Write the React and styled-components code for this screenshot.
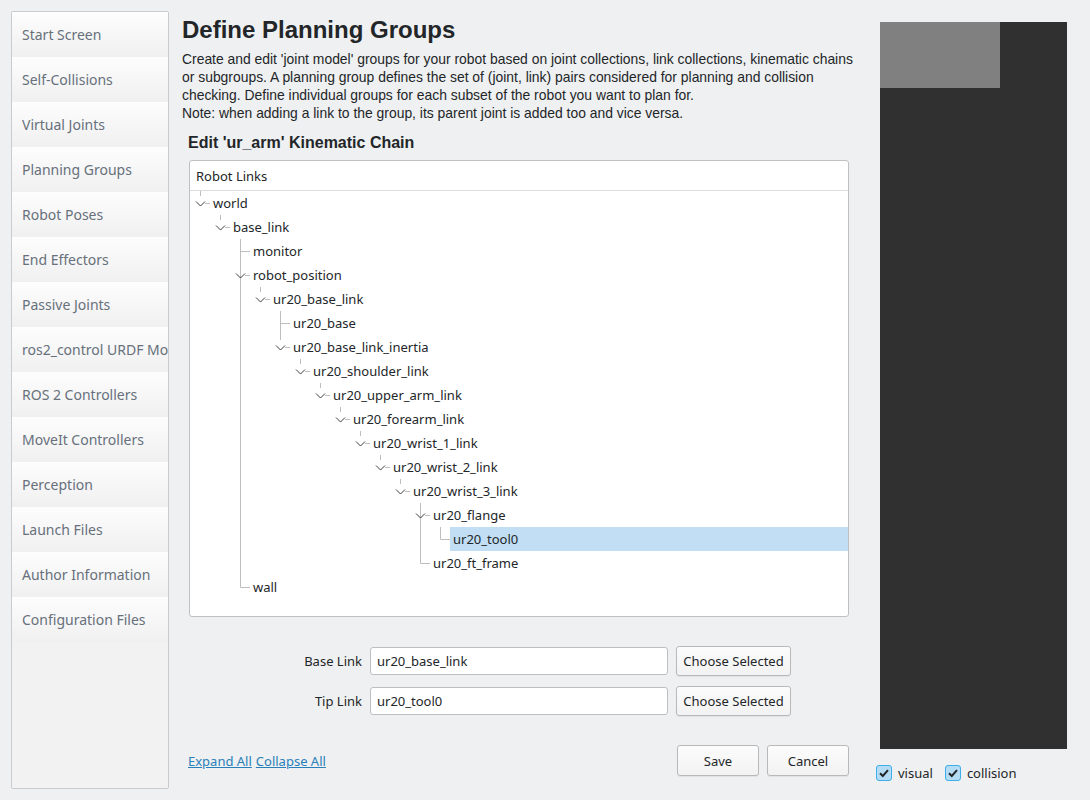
import React from "react";
import styled, { createGlobalStyle } from "styled-components";

const Global = createGlobalStyle`
  html, body { margin: 0; padding: 0; background: #eff0f1; }
  body { font-family: "Noto Sans", sans-serif; font-size: 13px; color: #232629; }
`;

const Page = styled.div`
  display: flex;
  height: 800px;
  box-sizing: border-box;
  padding: 11px 0 11px 11px;
  overflow: hidden;
`;

const Sidebar = styled.nav`
  width: 158px;
  box-sizing: border-box;
  border: 1px solid #cacbcc;
  border-radius: 2px;
  background: #f2f2f3;
  display: flex;
  flex-direction: column;
  flex-shrink: 0;
`;

const NavItem = styled.div`
  height: 45px;
  flex-shrink: 0;
  display: flex;
  align-items: center;
  padding-left: 10px;
  background: linear-gradient(#fdfdfd, #f0f0f1);
  color: #67707b;
  font-size: 14px;
  white-space: nowrap;
  overflow: hidden;
`;

const Main = styled.main`
  width: 680px;
  margin-left: 13px;
  display: flex;
  flex-direction: column;
  flex-shrink: 0;
`;

const Title = styled.h1`
  margin: 3px 0 0;
  font-family: "Liberation Sans", Arial, sans-serif;
  font-weight: bold;
  font-size: 24px;
  line-height: 32px;
  color: #232629;
`;

const Desc = styled.p`
  margin: 4px 0 0;
  font-family: "Liberation Sans", Arial, sans-serif;
  font-size: 13.9px;
  line-height: 18px;
  white-space: nowrap;
  color: #232629;
`;

const Group = styled.section`
  margin-left: 6px;
  width: 661px;
  display: flex;
  flex-direction: column;
`;

const SubTitle = styled.h2`
  margin: 10px 0 0;
  font-family: "Liberation Sans", Arial, sans-serif;
  font-weight: bold;
  font-size: 16px;
  line-height: 22px;
`;

const TreePanel = styled.div`
  margin-top: 6px;
  margin-left: 1px;
  height: 457px;
  box-sizing: border-box;
  border: 1px solid #bfc0c1;
  border-radius: 3px;
  background: #fff;
  display: flex;
  flex-direction: column;
  overflow: hidden;
`;

const TreeHeader = styled.div`
  height: 29px;
  border-bottom: 1px solid #dcdddd;
  display: flex;
  align-items: center;
  padding-left: 6px;
`;

const Row = styled.div`
  height: 24px;
  display: flex;
  align-items: stretch;
`;

const Label = styled.div`
  flex: 1;
  display: flex;
  align-items: center;
  padding-left: 3px;
  background: ${(p) => (p.$selected ? "#c1def4" : "transparent")};
  white-space: nowrap;
`;

const FormGrid = styled.div`
  margin-top: 29px;
  display: grid;
  grid-template-columns: 174px 298px 115px;
  grid-auto-rows: 30px;
  column-gap: 8px;
  row-gap: 10px;
  align-items: center;
`;

const FieldLabel = styled.label`
  text-align: right;
`;

const Input = styled.div`
  height: 28px;
  box-sizing: border-box;
  border: 1px solid #bcbebf;
  border-radius: 3px;
  background: #fff;
  display: flex;
  align-items: center;
  padding-left: 6px;
`;

const Button = styled.button`
  height: ${(p) => p.$h || 30}px;
  width: ${(p) => p.$w || 115}px;
  box-sizing: border-box;
  border: 1px solid #b8b9ba;
  border-radius: 3px;
  background: linear-gradient(#fcfcfc, #f2f2f3);
  box-shadow: 0 1px 1px rgba(0,0,0,0.06);
  font-family: "Noto Sans", sans-serif;
  font-size: 13px;
  color: #232629;
  padding: 0;
`;

const BottomRow = styled.div`
  margin-top: 29px;
  height: 31px;
  display: flex;
  align-items: center;
`;

const Links = styled.div`
  flex: 1;
  display: flex;
  gap: 4px;
`;

const Link = styled.a`
  color: #2980b9;
  text-decoration: underline;
  cursor: pointer;
`;

const Buttons = styled.div`
  display: flex;
  gap: 8px;
`;

const Right = styled.aside`
  margin-left: 14px;
  margin-top: 11px;
  display: flex;
  flex-direction: column;
`;

const Viewport = styled.div`
  margin-left: 4px;
  width: 187px;
  height: 727px;
  background: #303030;
`;

const Object3D = styled.div`
  width: 120px;
  height: 66px;
  background: #808080;
`;

const CheckRow = styled.div`
  margin-top: 14px;
  height: 20px;
  display: flex;
  align-items: center;
  gap: 12px;
`;

const Check = styled.label`
  display: flex;
  align-items: center;
  gap: 6px;
`;

const Box = styled.span`
  width: 16px;
  height: 16px;
  box-sizing: border-box;
  border: 1px solid #3daee9;
  border-radius: 3px;
  background: #b4dcf4;
  display: flex;
  align-items: center;
  justify-content: center;
`;

const navItems = [
  "Start Screen",
  "Self-Collisions",
  "Virtual Joints",
  "Planning Groups",
  "Robot Poses",
  "End Effectors",
  "Passive Joints",
  "ros2_control URDF Modifications",
  "ROS 2 Controllers",
  "MoveIt Controllers",
  "Perception",
  "Launch Files",
  "Author Information",
  "Configuration Files",
];

const tree = [
  ["world", 0],
  ["base_link", 1],
  ["monitor", 2],
  ["robot_position", 2],
  ["ur20_base_link", 3],
  ["ur20_base", 4],
  ["ur20_base_link_inertia", 4],
  ["ur20_shoulder_link", 5],
  ["ur20_upper_arm_link", 6],
  ["ur20_forearm_link", 7],
  ["ur20_wrist_1_link", 8],
  ["ur20_wrist_2_link", 9],
  ["ur20_wrist_3_link", 10],
  ["ur20_flange", 11],
  ["ur20_tool0", 12],
  ["ur20_ft_frame", 11],
  ["wall", 2],
];

function continues(i, c) {
  for (let j = i + 1; j < tree.length; j++) {
    const l = tree[j][1];
    if (l < c) return false;
    if (l === c) return true;
  }
  return false;
}

const LINE = "#bdbebf";

function BranchCell({ i, c, level }) {
  const own = c === level;
  const hasChildren = i + 1 < tree.length && tree[i + 1][1] > level;
  const later = continues(i, c);
  return (
    <svg width="20" height="24" style={{ flexShrink: 0, display: "block" }}>
      {!own && later && <line x1="10.5" y1="0" x2="10.5" y2="24" stroke={LINE} />}
      {own && hasChildren && (
        <>
          {later ? (
            <line x1="10.5" y1="0" x2="10.5" y2="24" stroke={LINE} />
          ) : (
            <line x1="10.5" y1="0" x2="10.5" y2="5" stroke={LINE} />
          )}
          <line x1="15" y1="12.5" x2="20" y2="12.5" stroke={LINE} />
          <polyline points="6,10.5 10.5,15 15,10.5" fill="none" stroke="#3b3e41" strokeWidth="1" />
        </>
      )}
      {own && !hasChildren && (
        <>
          <line x1="10.5" y1="0" x2="10.5" y2={later ? 24 : 12.5} stroke={LINE} />
          <line x1="10.5" y1="12.5" x2="20" y2="12.5" stroke={LINE} />
        </>
      )}
    </svg>
  );
}

function TreeRow({ i }) {
  const [name, level] = tree[i];
  const cells = [];
  for (let c = 0; c <= level; c++) cells.push(<BranchCell key={c} i={i} c={c} level={level} />);
  return (
    <Row>
      {cells}
      <Label $selected={name === "ur20_tool0"}>{name}</Label>
    </Row>
  );
}

function CheckIcon() {
  return (
    <svg width="12" height="12" viewBox="0 0 12 12">
      <polyline points="2,6.2 4.8,9 10,3.2" fill="none" stroke="#232629" strokeWidth="2" />
    </svg>
  );
}

export default function App() {
  return (
    <>
      <Global />
      <Page>
        <Sidebar>
          {navItems.map((n) => (
            <NavItem key={n}>{n}</NavItem>
          ))}
        </Sidebar>
        <Main>
          <Title>Define Planning Groups</Title>
          <Desc>
            Create and edit 'joint model' groups for your robot based on joint collections, link collections, kinematic chains
            <br />
            or subgroups. A planning group defines the set of (joint, link) pairs considered for planning and collision
            <br />
            checking. Define individual groups for each subset of the robot you want to plan for.
            <br />
            Note: when adding a link to the group, its parent joint is added too and vice versa.
          </Desc>
          <Group>
            <SubTitle>Edit 'ur_arm' Kinematic Chain</SubTitle>
            <TreePanel>
              <TreeHeader>Robot Links</TreeHeader>
              {tree.map((t, i) => (
                <TreeRow key={t[0]} i={i} />
              ))}
            </TreePanel>
            <FormGrid>
              <FieldLabel>Base Link</FieldLabel>
              <Input>ur20_base_link</Input>
              <Button>Choose Selected</Button>
              <FieldLabel>Tip Link</FieldLabel>
              <Input>ur20_tool0</Input>
              <Button>Choose Selected</Button>
            </FormGrid>
            <BottomRow>
              <Links>
                <Link>Expand All</Link>
                <Link>Collapse All</Link>
              </Links>
              <Buttons>
                <Button $w={82} $h={31}>Save</Button>
                <Button $w={82} $h={31}>Cancel</Button>
              </Buttons>
            </BottomRow>
          </Group>
        </Main>
        <Right>
          <Viewport>
            <Object3D />
          </Viewport>
          <CheckRow>
            <Check>
              <Box><CheckIcon /></Box>
              visual
            </Check>
            <Check>
              <Box><CheckIcon /></Box>
              collision
            </Check>
          </CheckRow>
        </Right>
      </Page>
    </>
  );
}
